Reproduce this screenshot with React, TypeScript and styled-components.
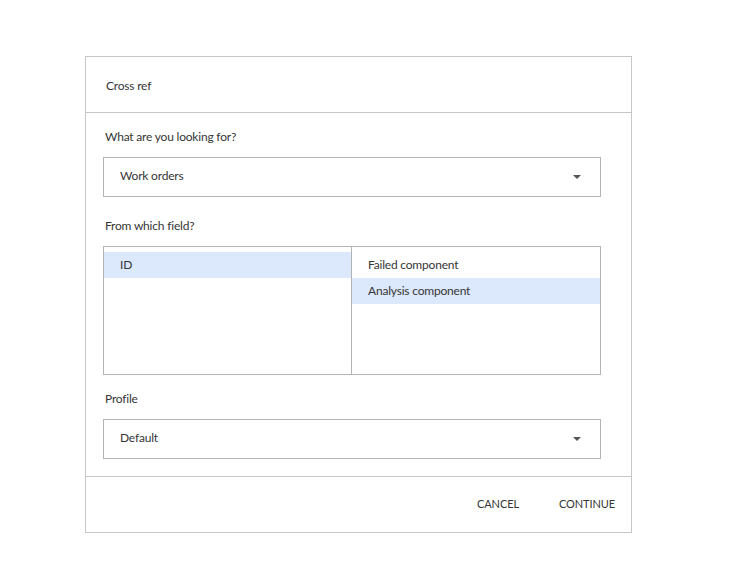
import React from "react";
import styled, { createGlobalStyle } from "styled-components";

const Global = createGlobalStyle`
  html, body { margin: 0; padding: 0; background: #fff; }
  body { font-family: Lato, "Open Sans", sans-serif; color: #363636; letter-spacing: -0.2px; }
  * { box-sizing: border-box; }
`;

const Page = styled.div`
  padding: 56px 0 0 85px;
`;

const Dialog = styled.div`
  width: 547px;
  border: 1px solid #c6c6c6;
  display: flex;
  flex-direction: column;
`;

const Header = styled.div`
  height: 56px;
  border-bottom: 1px solid #c6c6c6;
  display: flex;
  align-items: center;
  padding: 2px 0 0 20px;
  font-size: 12px;
`;

const Body = styled.div`
  padding: 0 30px 17px 17px;
  border-bottom: 1px solid #c6c6c6;
`;

const Label = styled.div<{ $top: number }>`
  margin-top: ${(p) => p.$top}px;
  margin-bottom: 11px;
  padding-left: 2px;
  line-height: 18px;
  font-size: 12px;
`;

const SelectBox = styled.div`
  height: 40px;
  border: 1px solid #b4b4b4;
  display: flex;
  align-items: center;
  justify-content: space-between;
  padding: 0 19px 3px 16px;
  font-size: 12px;
`;

const Caret = styled.span`
  width: 0;
  height: 0;
  margin-top: 3px;
  border-left: 4px solid transparent;
  border-right: 4px solid transparent;
  border-top: 4px solid #555;
`;

const ListBox = styled.div`
  height: 129px;
  border: 1px solid #b4b4b4;
  display: grid;
  grid-template-columns: 248px 1fr;
`;

const Column = styled.div<{ $divider?: boolean }>`
  padding-top: 5px;
  border-right: ${(p) => (p.$divider ? "1px solid #b4b4b4" : "none")};
`;

const Row = styled.div<{ $selected?: boolean; $pad: number }>`
  height: 26px;
  display: flex;
  align-items: center;
  padding-left: ${(p) => p.$pad}px;
  padding-bottom: 2px;
  font-size: 12px;
  background: ${(p) => (p.$selected ? "#dce8fc" : "transparent")};
`;

const Footer = styled.div`
  height: 55px;
  display: flex;
  align-items: center;
  justify-content: flex-end;
  gap: 24px;
  padding: 0 8px 3px 0;
`;

const Button = styled.button`
  background: none;
  border: none;
  padding: 0 8px;
  font-family: inherit;
  font-size: 11px;
  letter-spacing: -0.1px;
  color: #363636;
  cursor: pointer;
`;

export default function App() {
  return (
    <>
      <Global />
      <Page>
        <Dialog>
          <Header>Cross ref</Header>
          <Body>
            <Label $top={15}>What are you looking for?</Label>
            <SelectBox>
              <span>Work orders</span>
              <Caret />
            </SelectBox>
            <Label $top={20}>From which field?</Label>
            <ListBox>
              <Column $divider>
                <Row $selected $pad={16}>ID</Row>
              </Column>
              <Column>
                <Row $pad={16}>Failed component</Row>
                <Row $selected $pad={16}>Analysis component</Row>
              </Column>
            </ListBox>
            <Label $top={15}>Profile</Label>
            <SelectBox>
              <span>Default</span>
              <Caret />
            </SelectBox>
          </Body>
          <Footer>
            <Button>CANCEL</Button>
            <Button>CONTINUE</Button>
          </Footer>
        </Dialog>
      </Page>
    </>
  );
}
